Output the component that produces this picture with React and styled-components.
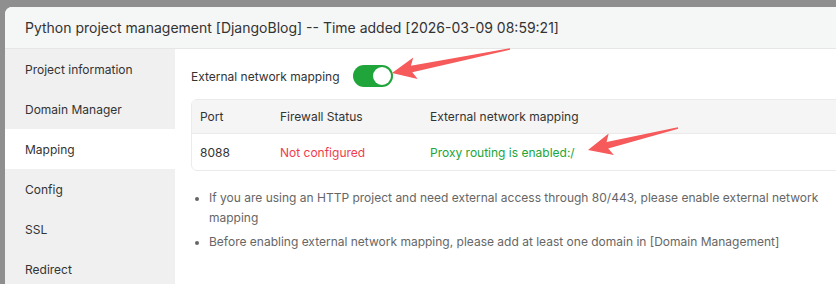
import React from "react";
import styled, { createGlobalStyle } from "styled-components";

const Global = createGlobalStyle`
  html, body { margin: 0; padding: 0; }
  body {
    width: 836px; height: 284px; overflow: hidden;
    background: #8f8f8f;
    font-family: Inter, "Noto Sans", "Liberation Sans", sans-serif;
    -webkit-font-smoothing: antialiased;
  }
`;

const Backdrop = styled.div`
  position: relative;
  width: 836px;
  height: 284px;
  padding: 7px 0 0 5px;
  box-sizing: border-box;
  overflow: hidden;
`;

const Modal = styled.div`
  width: 900px;
  height: 320px;
  background: #fff;
  border-radius: 7px 0 0 0;
  overflow: hidden;
  display: flex;
  flex-direction: column;
`;

const Header = styled.div`
  height: 41px;
  flex: none;
  background: #f5f6f6;
  border-bottom: 1px solid #e6e6e6;
  display: flex;
  align-items: center;
  padding-left: 20px;
  font-size: 14px;
  color: #333;
`;

const Body = styled.div`
  display: flex;
  flex: 1;
`;

const Sidebar = styled.div`
  width: 170px;
  flex: none;
  background: #f0f0f0;
  display: flex;
  flex-direction: column;
`;

const NavItem = styled.div`
  height: 40px;
  display: flex;
  align-items: center;
  padding-left: 20px;
  font-size: 12px;
  color: #333;
  background: ${(p) => (p.$active ? "#fff" : "transparent")};
`;

const Content = styled.div`
  flex: 1;
  padding: 16px 16px 0 16px;
  display: flex;
  flex-direction: column;
`;

const ToggleRow = styled.div`
  display: flex;
  align-items: center;
  gap: 13px;
  height: 22px;
  font-size: 12px;
  color: #333;
`;

const Switch = styled.div`
  width: 40px;
  height: 22px;
  border-radius: 11px;
  background: #20a53a;
  position: relative;
  flex: none;
  &::after {
    content: "";
    position: absolute;
    right: 2px;
    top: 2px;
    width: 18px;
    height: 18px;
    border-radius: 50%;
    background: #fff;
  }
`;

const TableWrap = styled.div`
  margin-top: 12px;
  width: 700px;
  border: 1px solid #ebebeb;
  border-radius: 6px;
  overflow: hidden;
`;

const Table = styled.table`
  width: 100%;
  border-collapse: collapse;
  font-size: 12px;
`;

const Th = styled.th`
  height: 33px;
  background: #f5f5f5;
  text-align: left;
  font-weight: 400;
  color: #333;
  padding: 0 0 0 8px;
  width: ${(p) => p.$w || "auto"};
  border-bottom: 1px solid #ebebeb;
`;

const Td = styled.td`
  height: 36px;
  padding: 0 0 0 8px;
  color: ${(p) => p.$color || "#333"};
`;

const Tips = styled.ul`
  margin: 17px 0 0 0;
  padding: 0 0 0 18px;
  width: 630px;
  font-size: 12px;
  line-height: 20px;
  color: #666;
  li { margin-bottom: 4px; }
  li::marker { font-size: 11px; }
`;

const Overlay = styled.svg`
  position: absolute;
  left: 0;
  top: 0;
  pointer-events: none;
`;

function arrowPoints(tip, tail, head = 24, half = 11, shaft = 3.4, tailW = 0.8) {
  const dx = tail[0] - tip[0];
  const dy = tail[1] - tip[1];
  const L = Math.hypot(dx, dy);
  const u = [dx / L, dy / L];
  const N = [-u[1], u[0]];
  const p = (a, b) => [tip[0] + a * u[0] + b * N[0], tip[1] + a * u[1] + b * N[1]];
  const pts = [
    tip,
    p(head, -half),
    p(head - 4, -shaft),
    [tail[0] - tailW * N[0], tail[1] - tailW * N[1]],
    [tail[0] + tailW * N[0], tail[1] + tailW * N[1]],
    p(head - 4, shaft),
    p(head, half),
  ];
  return pts.map((q) => q.map((v) => v.toFixed(1)).join(",")).join(" ");
}

const Arrow = ({ tip, tail }) => (
  <polygon points={arrowPoints(tip, tail)} fill="#f65a5a" />
);

export default function App() {
  const nav = ["Project information", "Domain Manager", "Mapping", "Config", "SSL", "Redirect"];
  return (
    <>
      <Global />
      <Backdrop>
        <Modal>
          <Header>Python project management [DjangoBlog] -- Time added [2026-03-09 08:59:21]</Header>
          <Body>
            <Sidebar>
              {nav.map((n) => (
                <NavItem key={n} $active={n === "Mapping"}>{n}</NavItem>
              ))}
            </Sidebar>
            <Content>
              <ToggleRow>
                External network mapping
                <Switch />
              </ToggleRow>
              <TableWrap>
                <Table>
                  <thead>
                    <tr>
                      <Th $w="72px">Port</Th>
                      <Th $w="142px">Firewall Status</Th>
                      <Th>External network mapping</Th>
                    </tr>
                  </thead>
                  <tbody>
                    <tr>
                      <Td>8088</Td>
                      <Td $color="#f03c4e">Not configured</Td>
                      <Td $color="#20a53a">Proxy routing is enabled:/</Td>
                    </tr>
                  </tbody>
                </Table>
              </TableWrap>
              <Tips>
                <li>If you are using an HTTP project and need external access through 80/443, please enable external network mapping</li>
                <li>Before enabling external network mapping, please add at least one domain in [Domain Management]</li>
              </Tips>
            </Content>
          </Body>
        </Modal>
        <Overlay width="836" height="284" viewBox="0 0 836 284">
          <Arrow tip={[392, 73]} tail={[510, 49]} />
          <Arrow tip={[588, 150]} tail={[678, 128]} />
        </Overlay>
      </Backdrop>
    </>
  );
}
